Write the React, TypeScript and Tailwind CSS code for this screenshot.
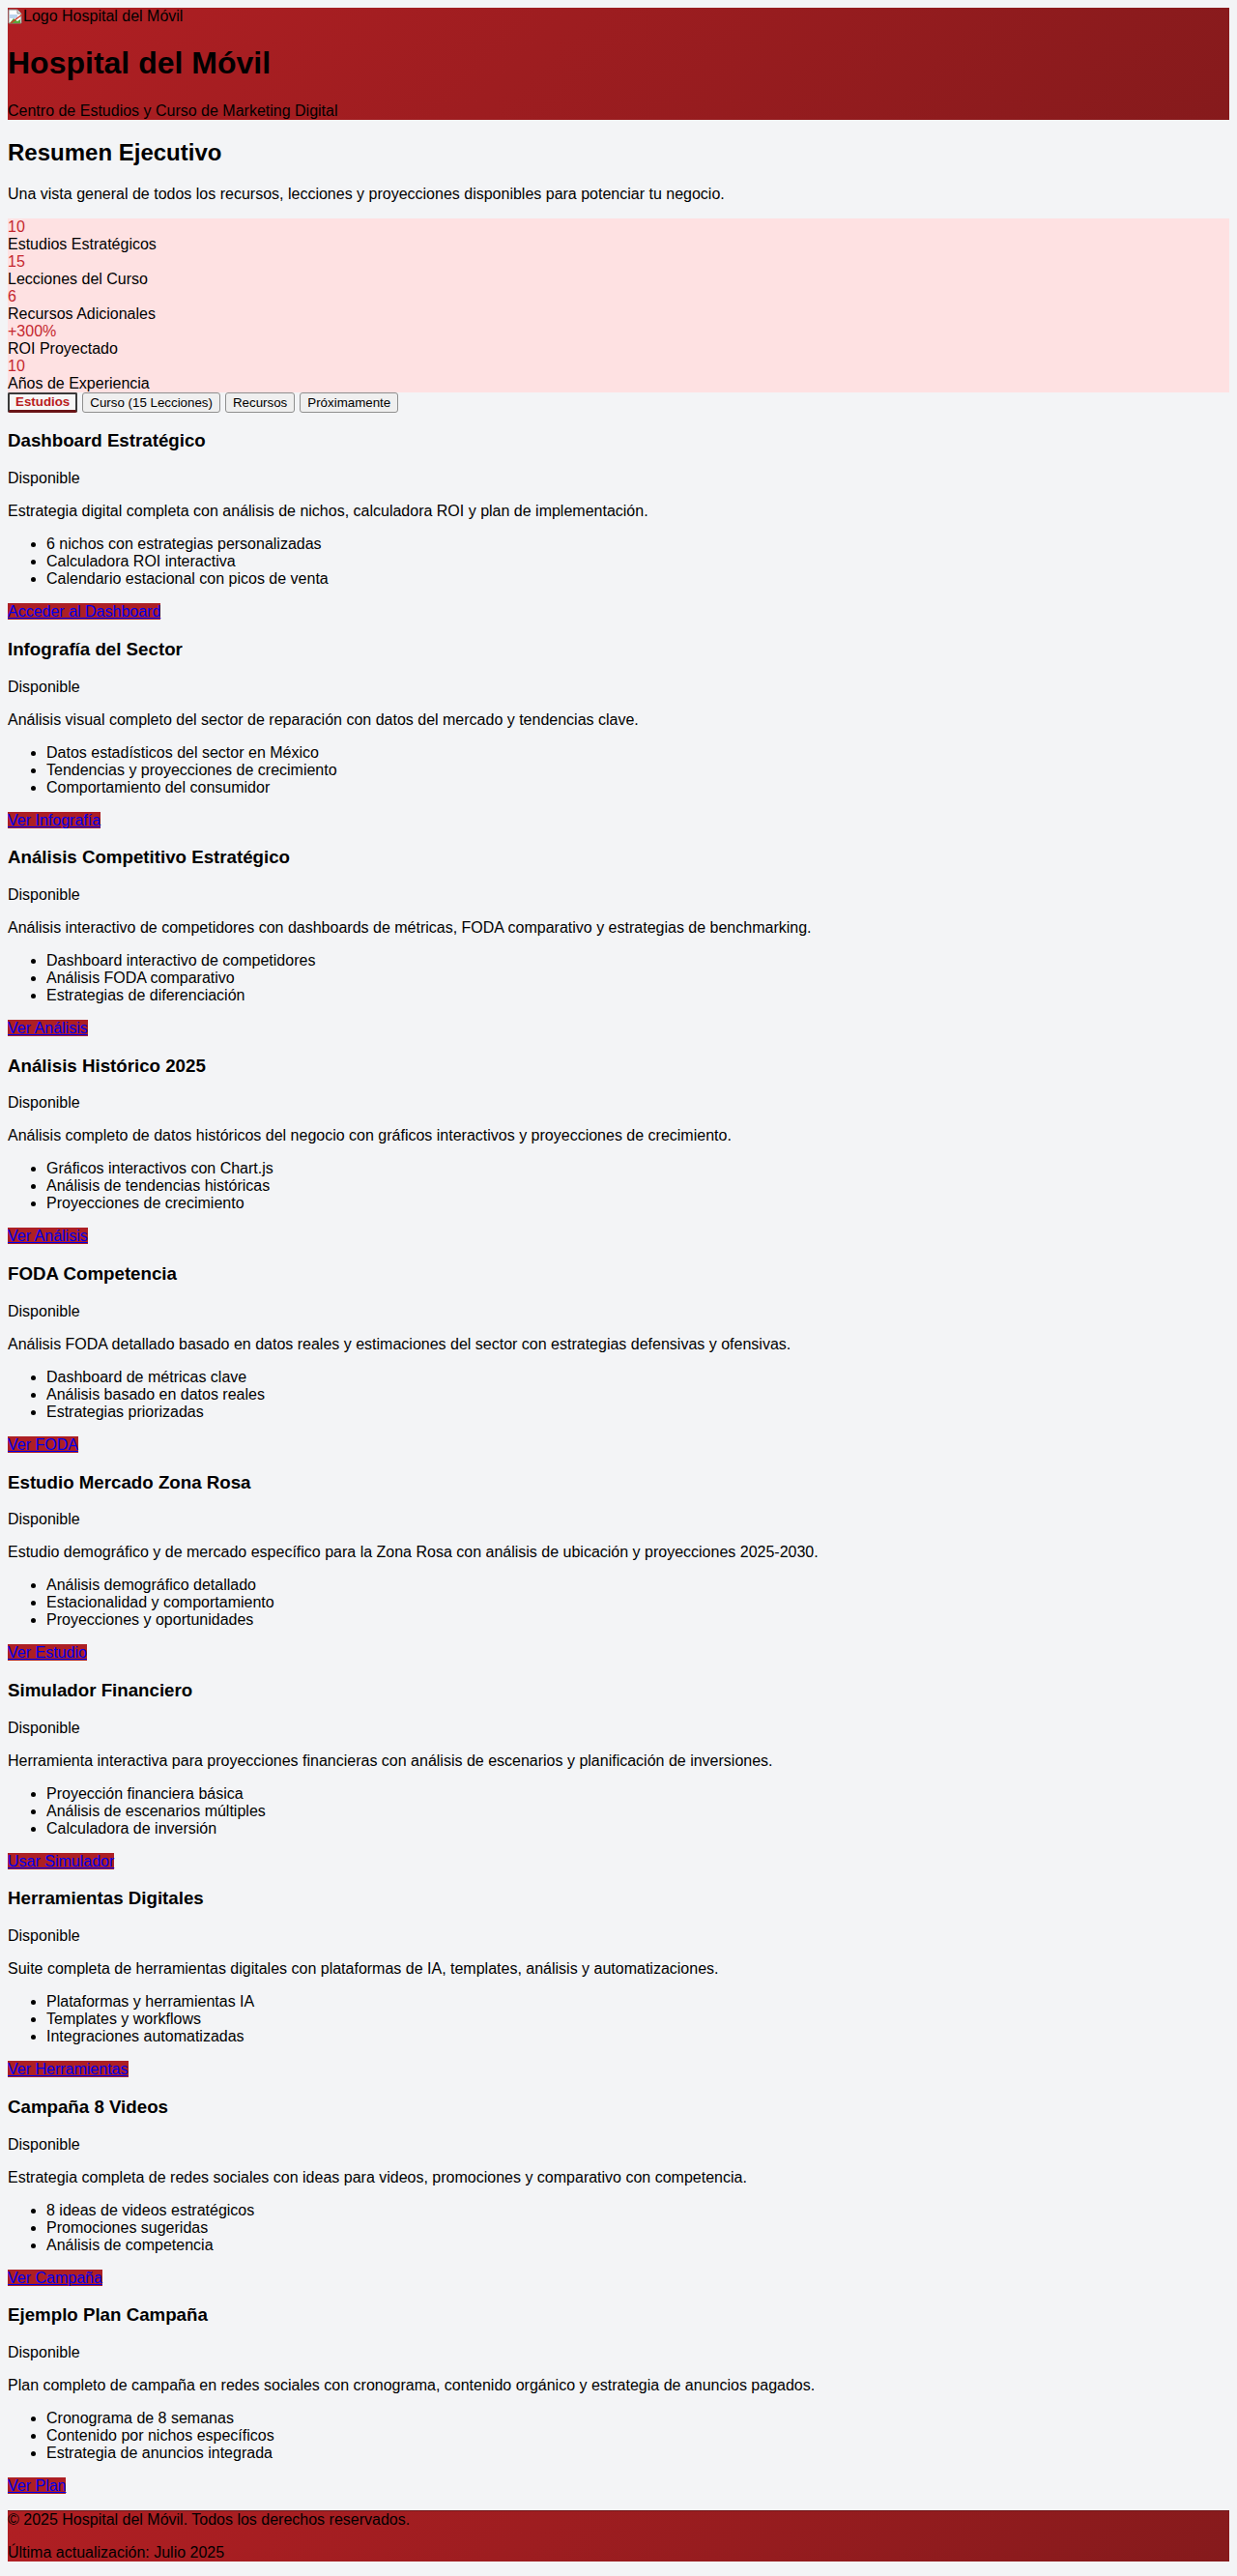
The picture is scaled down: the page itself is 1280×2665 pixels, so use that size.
const stats = [
  { value: "10", label: "Estudios Estratégicos" },
  { value: "15", label: "Lecciones del Curso" },
  { value: "6", label: "Recursos Adicionales" },
  { value: "+300%", label: "ROI Proyectado" },
  { value: "10", label: "Años de Experiencia" },
];

const tabs = ["Estudios", "Curso (15 Lecciones)", "Recursos", "Próximamente"];

const studies = [
  {
    title: "Dashboard Estratégico",
    desc: "Estrategia digital completa con análisis de nichos, calculadora ROI y plan de implementación.",
    items: [
      "6 nichos con estrategias personalizadas",
      "Calculadora ROI interactiva",
      "Calendario estacional con picos de venta",
    ],
    cta: "Acceder al Dashboard",
  },
  {
    title: "Infografía del Sector",
    desc: "Análisis visual completo del sector de reparación con datos del mercado y tendencias clave.",
    items: [
      "Datos estadísticos del sector en México",
      "Tendencias y proyecciones de crecimiento",
      "Comportamiento del consumidor",
    ],
    cta: "Ver Infografía",
  },
  {
    title: "Análisis Competitivo Estratégico",
    desc: "Análisis interactivo de competidores con dashboards de métricas, FODA comparativo y estrategias de benchmarking.",
    items: [
      "Dashboard interactivo de competidores",
      "Análisis FODA comparativo",
      "Estrategias de diferenciación",
    ],
    cta: "Ver Análisis",
  },
  {
    title: "Análisis Histórico 2025",
    desc: "Análisis completo de datos históricos del negocio con gráficos interactivos y proyecciones de crecimiento.",
    items: [
      "Gráficos interactivos con Chart.js",
      "Análisis de tendencias históricas",
      "Proyecciones de crecimiento",
    ],
    cta: "Ver Análisis",
  },
  {
    title: "FODA Competencia",
    desc: "Análisis FODA detallado basado en datos reales y estimaciones del sector con estrategias defensivas y ofensivas.",
    items: [
      "Dashboard de métricas clave",
      "Análisis basado en datos reales",
      "Estrategias priorizadas",
    ],
    cta: "Ver FODA",
  },
  {
    title: "Estudio Mercado Zona Rosa",
    desc: "Estudio demográfico y de mercado específico para la Zona Rosa con análisis de ubicación y proyecciones 2025-2030.",
    items: [
      "Análisis demográfico detallado",
      "Estacionalidad y comportamiento",
      "Proyecciones y oportunidades",
    ],
    cta: "Ver Estudio",
  },
  {
    title: "Simulador Financiero",
    desc: "Herramienta interactiva para proyecciones financieras con análisis de escenarios y planificación de inversiones.",
    items: [
      "Proyección financiera básica",
      "Análisis de escenarios múltiples",
      "Calculadora de inversión",
    ],
    cta: "Usar Simulador",
  },
  {
    title: "Herramientas Digitales",
    desc: "Suite completa de herramientas digitales con plataformas de IA, templates, análisis y automatizaciones.",
    items: [
      "Plataformas y herramientas IA",
      "Templates y workflows",
      "Integraciones automatizadas",
    ],
    cta: "Ver Herramientas",
  },
  {
    title: "Campaña 8 Videos",
    desc: "Estrategia completa de redes sociales con ideas para videos, promociones y comparativo con competencia.",
    items: [
      "8 ideas de videos estratégicos",
      "Promociones sugeridas",
      "Análisis de competencia",
    ],
    cta: "Ver Campaña",
  },
  {
    title: "Ejemplo Plan Campaña",
    desc: "Plan completo de campaña en redes sociales con cronograma, contenido orgánico y estrategia de anuncios pagados.",
    items: [
      "Cronograma de 8 semanas",
      "Contenido por nichos específicos",
      "Estrategia de anuncios integrada",
    ],
    cta: "Ver Plan",
  },
];

function BrokenImage() {
  return (
    <svg width="16" height="16" viewBox="0 0 16 16" className="shrink-0">
      <path d="M1 1h9l4 4v10H1z" fill="#fff" stroke="#8a8a8a" />
      <path d="M10 1v4h4" fill="#e5e5e5" stroke="#8a8a8a" />
      <rect x="2" y="6" width="8" height="4" fill="#bcd4ee" />
      <path d="M2 15l4-5 4 3 3-2v4z" fill="#5aa63c" />
      <path d="M3 15L15 6" stroke="#d23a2a" strokeWidth="1.4" />
    </svg>
  );
}

export default function App() {
  const active = "Estudios";

  return (
    <div className="min-h-screen bg-[#f3f4f6] p-2 font-['Liberation_Sans',Arial,sans-serif] text-base leading-[normal] text-black">
      <header className="bg-linear-135 from-[#b01f23] to-[#861a1c]">
        <div className="flex h-[18px] items-center">
          <BrokenImage />
          <span>Logo Hospital del Móvil</span>
        </div>
        <h1 className="mt-[21.44px] text-[32px] font-bold leading-[normal]">
          Hospital del Móvil
        </h1>
        <p className="mt-[21.44px]">Centro de Estudios y Curso de Marketing Digital</p>
      </header>

      <main>
        <h2 className="my-[19.92px] text-2xl font-bold leading-[normal]">
          Resumen Ejecutivo
        </h2>
        <p className="mb-4">
          Una vista general de todos los recursos, lecciones y proyecciones disponibles para potenciar tu negocio.
        </p>

        <div className="bg-[#fee1e2]">
          {stats.map((s) => (
            <div key={s.label}>
              <div className="text-[#c5282f]">{s.value}</div>
              <div>{s.label}</div>
            </div>
          ))}
        </div>

        <div className="flex gap-[5px]">
          {tabs.map((t) =>
            t === active ? (
              <button
                key={t}
                type="button"
                className="h-[21px] rounded-[2px] border-2 border-[#3a3a3a] border-b-[3px] border-b-[#6a1416] bg-[#f6f6f6] px-[6px] text-[13.33px] font-bold leading-none text-[#b91c1c]"
              >
                {t}
              </button>
            ) : (
              <button
                key={t}
                type="button"
                className="h-[21px] rounded-[3px] border border-[#8f8f8f] bg-[#efefef] px-[7px] text-[13.33px] leading-none text-black"
              >
                {t}
              </button>
            ),
          )}
        </div>

        {studies.map((s) => (
          <div key={s.title}>
            <h3 className="my-[18.72px] text-[18.72px] font-bold leading-[normal]">
              {s.title}
            </h3>
            <p className="mb-4">Disponible</p>
            <p className="mb-4">{s.desc}</p>
            <ul className="mb-4 list-disc pl-10">
              {s.items.map((i) => (
                <li key={i}>{i}</li>
              ))}
            </ul>
            <a href="#" className="bg-[#ad1f24] text-[#0000ee] underline">
              {s.cta}
            </a>
          </div>
        ))}
      </main>

      <footer className="mt-4 border-t border-[#6e1517] bg-linear-135 from-[#b01f23] to-[#861a1c]">
        <p className="mb-4">© 2025 Hospital del Móvil. Todos los derechos reservados.</p>
        <p>Última actualización: Julio 2025</p>
      </footer>
    </div>
  );
}
